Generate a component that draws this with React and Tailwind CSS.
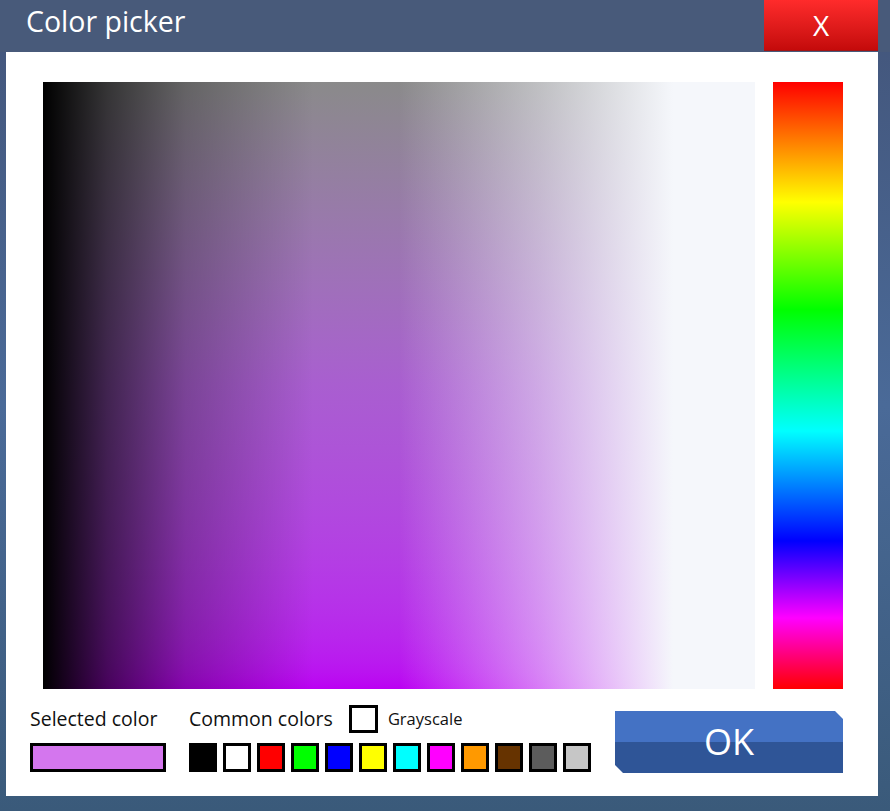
import React from 'react';

const commonColors = [
  '#000000', '#ffffff', '#ff0000', '#00ff00', '#0000ff', '#ffff00',
  '#00ffff', '#ff00ff', '#ff9900', '#663300', '#5c5c5c', '#c6c6c6',
];

const App = () => {
  return (
    <div className="w-[890px] h-[811px] overflow-hidden bg-linear-to-b from-[#43557a] via-[#4a6a98] to-[#3a5a7a] font-['Open_Sans',sans-serif]">
      {/* title bar */}
      <div className="h-[52px] flex bg-[#485a7a]">
        <div className="flex-1 pl-[26px] pt-[2px] text-[28.5px] leading-[38px] text-white">Color picker</div>
        <button className="w-[114px] h-[51px] mr-[12px] bg-linear-to-b from-[#ff2b2b] to-[#c40a0a] border-b border-[#a01414] text-white text-[28px] leading-none">
          X
        </button>
      </div>

      <div className="flex pl-[6px]">
        <div className="w-[872px] h-[744px] bg-white flex flex-col">
          {/* pickers */}
          <div className="flex pl-[37px] pt-[30px] gap-[18px]">
            <div className="w-[712px] h-[607px] bg-linear-to-b from-[#8a8a8a] via-[#a95ed0] to-[#bb00f2]">
              <div className="w-full h-full bg-[linear-gradient(to_right,#000_0%,rgba(0,0,0,0.62)_9%,rgba(0,0,0,0.28)_20%,rgba(0,0,0,0)_38%,rgba(245,247,251,0)_50%,rgba(245,247,251,0.5)_70%,#f5f7fb_88.5%,#f5f7fb_100%)]" />
            </div>
            <div className="w-[70px] h-[607px] bg-[linear-gradient(to_bottom,#f00_0%,#ff0_19.8%,#0f0_37.5%,#0ff_57.5%,#00f_75.6%,#f0f_88.3%,#f00_100%)]" />
          </div>

          {/* bottom controls */}
          <div className="flex items-start mt-[16px] pl-[24px]">
            <div className="w-[136px]">
              <div className="h-[28px] flex items-center text-[19.5px] text-[#111] whitespace-nowrap">Selected color</div>
              <div className="mt-[10px] w-[136px] h-[29px] border-[3px] border-black bg-[#d476ee]" />
            </div>

            <div className="ml-[23px]">
              <div className="h-[28px] flex items-center">
                <span className="text-[19.5px] text-[#111] whitespace-nowrap">Common colors</span>
                <div className="ml-[16px] w-[29px] h-[28px] border-[3px] border-black bg-white" />
                <span className="ml-[10px] text-[16.5px] text-[#111]">Grayscale</span>
              </div>
              <div className="mt-[10px] flex gap-[6px]">
                {commonColors.map(c => (
                  <div key={c} className="w-[28px] h-[29px] border-[3px] border-black" style={{ backgroundColor: c }} />
                ))}
              </div>
            </div>

            <button className="ml-auto mr-[35px] mt-[6px] w-[228px] h-[62px] text-white text-[36px] leading-none bg-linear-to-b from-[#4472c4] from-50% to-[#2f5597] to-50% [clip-path:polygon(0_0,calc(100%-8px)_0,100%_8px,100%_100%,8px_100%,0_calc(100%-8px))]">
              OK
            </button>
          </div>
        </div>
      </div>
    </div>
  );
};

export default App;
